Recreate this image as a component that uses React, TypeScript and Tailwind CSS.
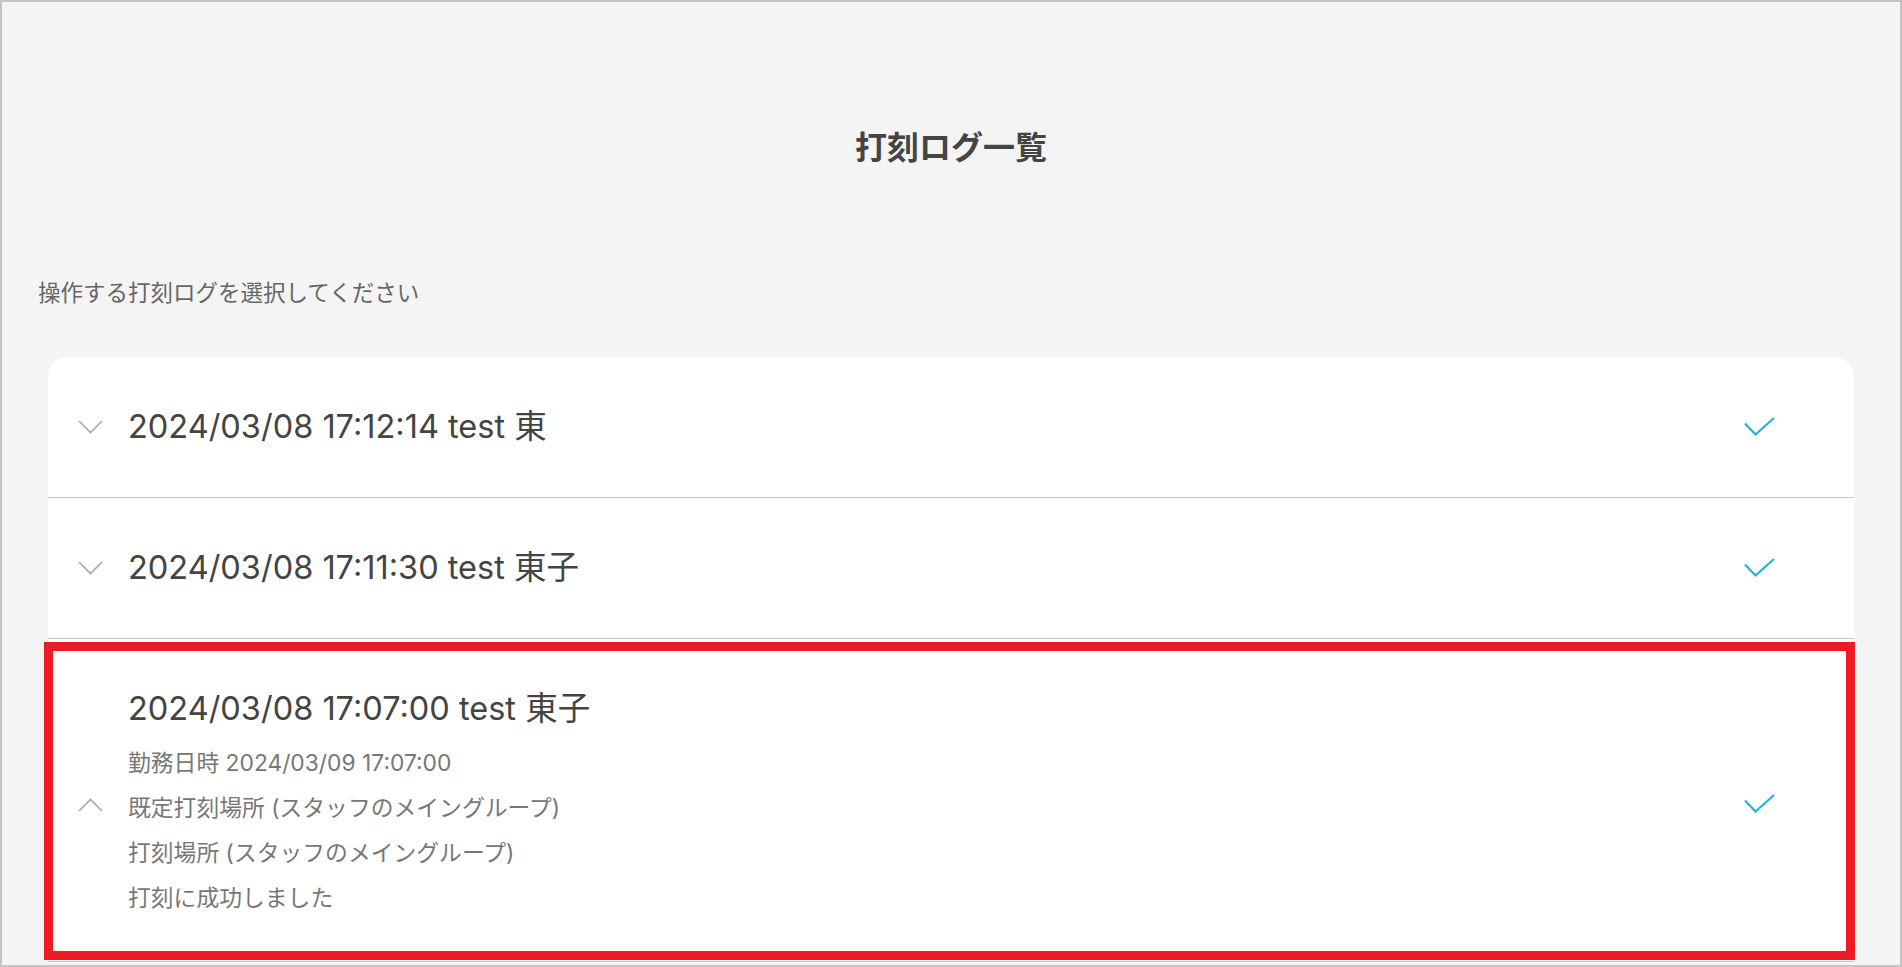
import React from "react";

const FONT = { fontFamily: 'Inter, "Noto Sans CJK JP", sans-serif' };

function ChevronDown() {
  return (
    <svg width="25" height="14" viewBox="0 0 25 14" fill="none">
      <path d="M1 1 L12.5 12.5 L24 1" stroke="#a8a8a8" strokeWidth="1.6" />
    </svg>
  );
}

function ChevronUp() {
  return (
    <svg width="25" height="14" viewBox="0 0 25 14" fill="none">
      <path d="M1 13 L12.5 1.5 L24 13" stroke="#a8a8a8" strokeWidth="1.6" />
    </svg>
  );
}

function Check() {
  return (
    <svg width="31" height="21" viewBox="0 0 31 21" fill="none">
      <path d="M1 6.5 L11.5 17.5 L30 1" stroke="#22b4d8" strokeWidth="2.2" />
    </svg>
  );
}

function Row({ title, open, details }: { title: string; open?: boolean; details?: string[] }) {
  return (
    <div
      className={
        "flex items-center pl-[30px] pr-[79px] border-b border-[#c8c8c8] " +
        (open ? "pt-[50px] pb-[41px]" : "h-[141px]")
      }
    >
      <div className="w-[25px] flex items-center">{open ? <ChevronUp /> : <ChevronDown />}</div>
      <div className="flex-1 ml-[25px]">
        <div className="text-[32.5px] leading-[40px] text-[#444]">{title}</div>
        {details && (
          <div className="mt-[11px]">
            {details.map((d) => (
              <div key={d} className="text-[22.8px] leading-[45px] text-[#777]">
                {d}
              </div>
            ))}
          </div>
        )}
      </div>
      <Check />
    </div>
  );
}

export default function App() {
  return (
    <div
      style={FONT}
      className="relative w-[1902px] h-[967px] overflow-hidden border-2 border-[#c4c4c4] bg-[#f4f4f4]"
    >
      <h1 className="pt-[126px] text-center text-[32px] leading-[40px] font-bold text-[#444]">
        打刻ログ一覧
      </h1>
      <p className="mt-[110px] pl-[36px] text-[22.5px] leading-[30px] text-[#666]">
        操作する打刻ログを選択してください
      </p>
      <div className="mt-[49px] mx-[46px] bg-white rounded-t-[20px]">
        <Row title="2024/03/08 17:12:14 test 東" />
        <Row title="2024/03/08 17:11:30 test 東子" />
        <Row
          open
          title="2024/03/08 17:07:00 test 東子"
          details={[
            "勤務日時 2024/03/09 17:07:00",
            "既定打刻場所 (スタッフのメイングループ)",
            "打刻場所 (スタッフのメイングループ)",
            "打刻に成功しました",
          ]}
        />
      </div>
      <div className="absolute left-[42px] top-[640px] w-[1811px] h-[318px] border-[9px] border-[#ed1c24] pointer-events-none" />
    </div>
  );
}
